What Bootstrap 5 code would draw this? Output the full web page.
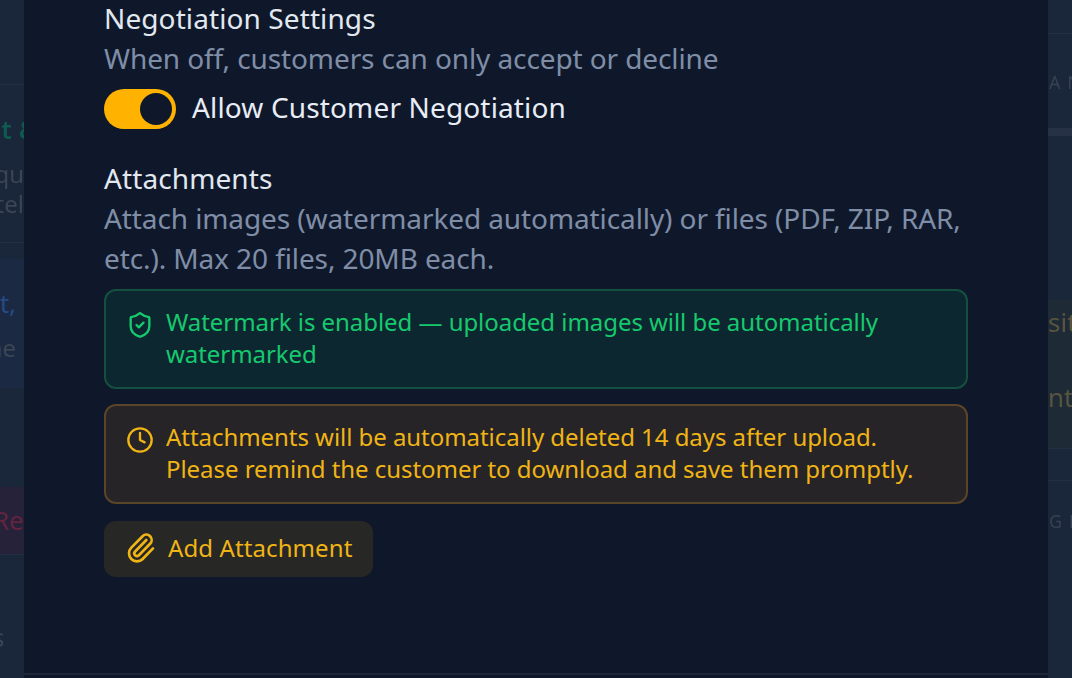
<!DOCTYPE html>
<html lang="en">
<head>
<meta charset="utf-8">
<title>Negotiation Settings</title>
<link href="https://cdn.jsdelivr.net/npm/bootstrap@5.3.0/dist/css/bootstrap.min.css" rel="stylesheet">
<style>
html,body{height:678px;overflow:hidden;background:#1a2639;}
body{font-family:"Noto Sans","Open Sans","Liberation Sans",sans-serif;}
.stage{height:678px;}
.side{width:24px;flex:none;background:#1a2639;overflow:hidden;font-size:26px;white-space:nowrap;}
.blurred{filter:blur(.7px);height:678px;}
.rowline{border-bottom:1px solid #232f42;}
.sl{height:40px;line-height:40px;display:flex;justify-content:flex-end;color:#3a4656;}
.sl-short{height:30px;line-height:30px;font-size:24px;}
.sl-in8{padding-right:8px;}
.sl-green{color:#0e5a50;margin-right:-14px;}
.sl-out{margin-right:-19px;justify-content:flex-start;margin-left:-8px;}
.sr{height:40px;line-height:40px;color:#364254;letter-spacing:1px;font-size:18px;padding-left:1px;}
.dlg{flex:1;background:#0f182b;padding:0 80px;position:relative;color:#e2e8f0;}
.dlg-end{position:absolute;left:0;right:0;bottom:3px;border-top:2px solid #1d2739;}
.ttl{font-size:28px;line-height:40px;color:#e2e8f0;letter-spacing:.1px;}
.ttl-first{margin-top:-2px;}
.hint{font-size:28px;line-height:40px;color:#7f8ea6;letter-spacing:-.1px;}
.sw-row{height:40px;margin-top:11px;margin-bottom:29px;}
.sw{width:72px;height:40px;border-radius:20px;background:#ffb300;position:relative;flex:none;}
.sw::after{content:"";position:absolute;right:4px;top:4px;width:32px;height:32px;border-radius:50%;background:#0f182b;}
.swl{font-size:28px;line-height:36px;color:#e8edf5;margin-left:16px;margin-bottom:4px;letter-spacing:.15px;}
.note{border-radius:12px;padding:15px 20px 17px;font-size:24px;line-height:32px;border:2px solid;gap:12px;letter-spacing:-.05px;}
.note svg{flex:none;width:28px;height:28px;margin-top:5px;}
.note-g{background:#0c2730;border-color:#14503f;color:#17c96e;margin-top:11px;}
.note-a{background:#262426;border-color:#5a4528;color:#f0b416;margin-top:15px;}
.addb{display:inline-flex;align-items:center;gap:11px;background:#272725;color:#f0b416;border:0;border-radius:12px;height:56px;padding:0 21px 2px 21px;font-size:24px;margin-top:17px;letter-spacing:.1px;}
.addb:hover{background:#272725;color:#f0b416;}
.addb svg{width:32px;height:32px;flex:none;}
</style>
</head>
<body>
<div class="d-flex stage">
  <aside class="side">
    <div class="blurred">
    <div style="height:85px" class="rowline"></div>
    <div class="sl sl-green fw-semibold mt-4">t &amp;</div>
    <div class="sl sl-short" style="margin-top:10px">qu</div>
    <div class="sl sl-short">tel</div>
    <div class="rowline" style="height:24px"></div>
    <div style="height:129px;background:#1b2942;margin-top:16px;padding-top:24px">
      <div class="sl sl-in8" style="color:#254a86">t,</div>
      <div class="sl sl-short sl-in8" style="margin-top:10px">ne</div>
    </div>
    <div style="height:99px"></div>
    <div style="height:68px;background:#26223a;padding-top:13px" class="rowline">
      <div class="sl" style="color:#632440">Re</div>
    </div>
    <div class="sl sl-out" style="margin-top:62px">s</div>
    </div>
  </aside>
  <main class="dlg">
    <div class="ttl ttl-first">Negotiation Settings</div>
    <div class="hint">When off, customers can only accept or decline</div>
    <div class="d-flex align-items-center sw-row">
      <span class="sw" role="switch" aria-checked="true"></span>
      <span class="swl">Allow Customer Negotiation</span>
    </div>
    <div class="ttl">Attachments</div>
    <div class="hint">Attach images (watermarked automatically) or files (PDF, ZIP, RAR, etc.). Max 20 files, 20MB each.</div>
    <div class="d-flex note note-g">
      <svg viewBox="0 0 24 24" fill="none" stroke="currentColor" stroke-width="2" stroke-linecap="round" stroke-linejoin="round"><path d="M20 13c0 5-3.5 7.5-7.66 8.95a1 1 0 0 1-.67-.01C7.5 20.5 4 18 4 13V6a1 1 0 0 1 1-1c2 0 4.5-1.2 6.24-2.72a1.17 1.17 0 0 1 1.52 0C14.51 3.81 17 5 19 5a1 1 0 0 1 1 1z"/><path d="m9 12 2 2 4-4"/></svg>
      <div>Watermark is enabled — uploaded images will be automatically watermarked</div>
    </div>
    <div class="d-flex note note-a">
      <svg viewBox="0 0 24 24" fill="none" stroke="currentColor" stroke-width="2" stroke-linecap="round" stroke-linejoin="round"><circle cx="12" cy="12" r="10"/><path d="M12 6v6l4 2"/></svg>
      <div>Attachments will be automatically deleted 14 days after upload.<br>Please remind the customer to download and save them promptly.</div>
    </div>
    <button type="button" class="btn addb">
      <svg viewBox="0 0 24 24" fill="none" stroke="currentColor" stroke-width="2" stroke-linecap="round" stroke-linejoin="round"><path d="M13.234 20.252 21 12.3"/><path d="m16 6-8.414 8.586a2 2 0 0 0 0 2.828 2 2 0 0 0 2.828 0l8.414-8.586a4 4 0 0 0 0-5.656 4 4 0 0 0-5.656 0l-8.415 8.585a6 6 0 1 0 8.486 8.486"/></svg>
      <span>Add Attachment</span>
    </button>
    <div class="dlg-end"></div>
  </main>
  <aside class="side">
    <div class="blurred">
    <div class="rowline" style="height:34px"></div>
    <div class="sr" style="margin-top:28px">A N</div>
    <div style="height:8px;background:#263146;margin-top:26px"></div>
    <div style="height:164px"></div>
    <div style="height:148px;background:#1f2a37;padding-top:5px;color:#57553f">
      <div style="height:35px;line-height:35px">sit</div>
      <div style="height:40px;line-height:40px;margin-top:37px">nt</div>
    </div>
    <div class="rowline" style="height:33px;border-top:1px solid #232f42"></div>
    <div class="sr" style="margin-top:20px">G R</div>
    </div>
  </aside>
</div>
<script src="https://cdn.jsdelivr.net/npm/bootstrap@5.3.0/dist/js/bootstrap.bundle.min.js"></script>
</body>
</html>
